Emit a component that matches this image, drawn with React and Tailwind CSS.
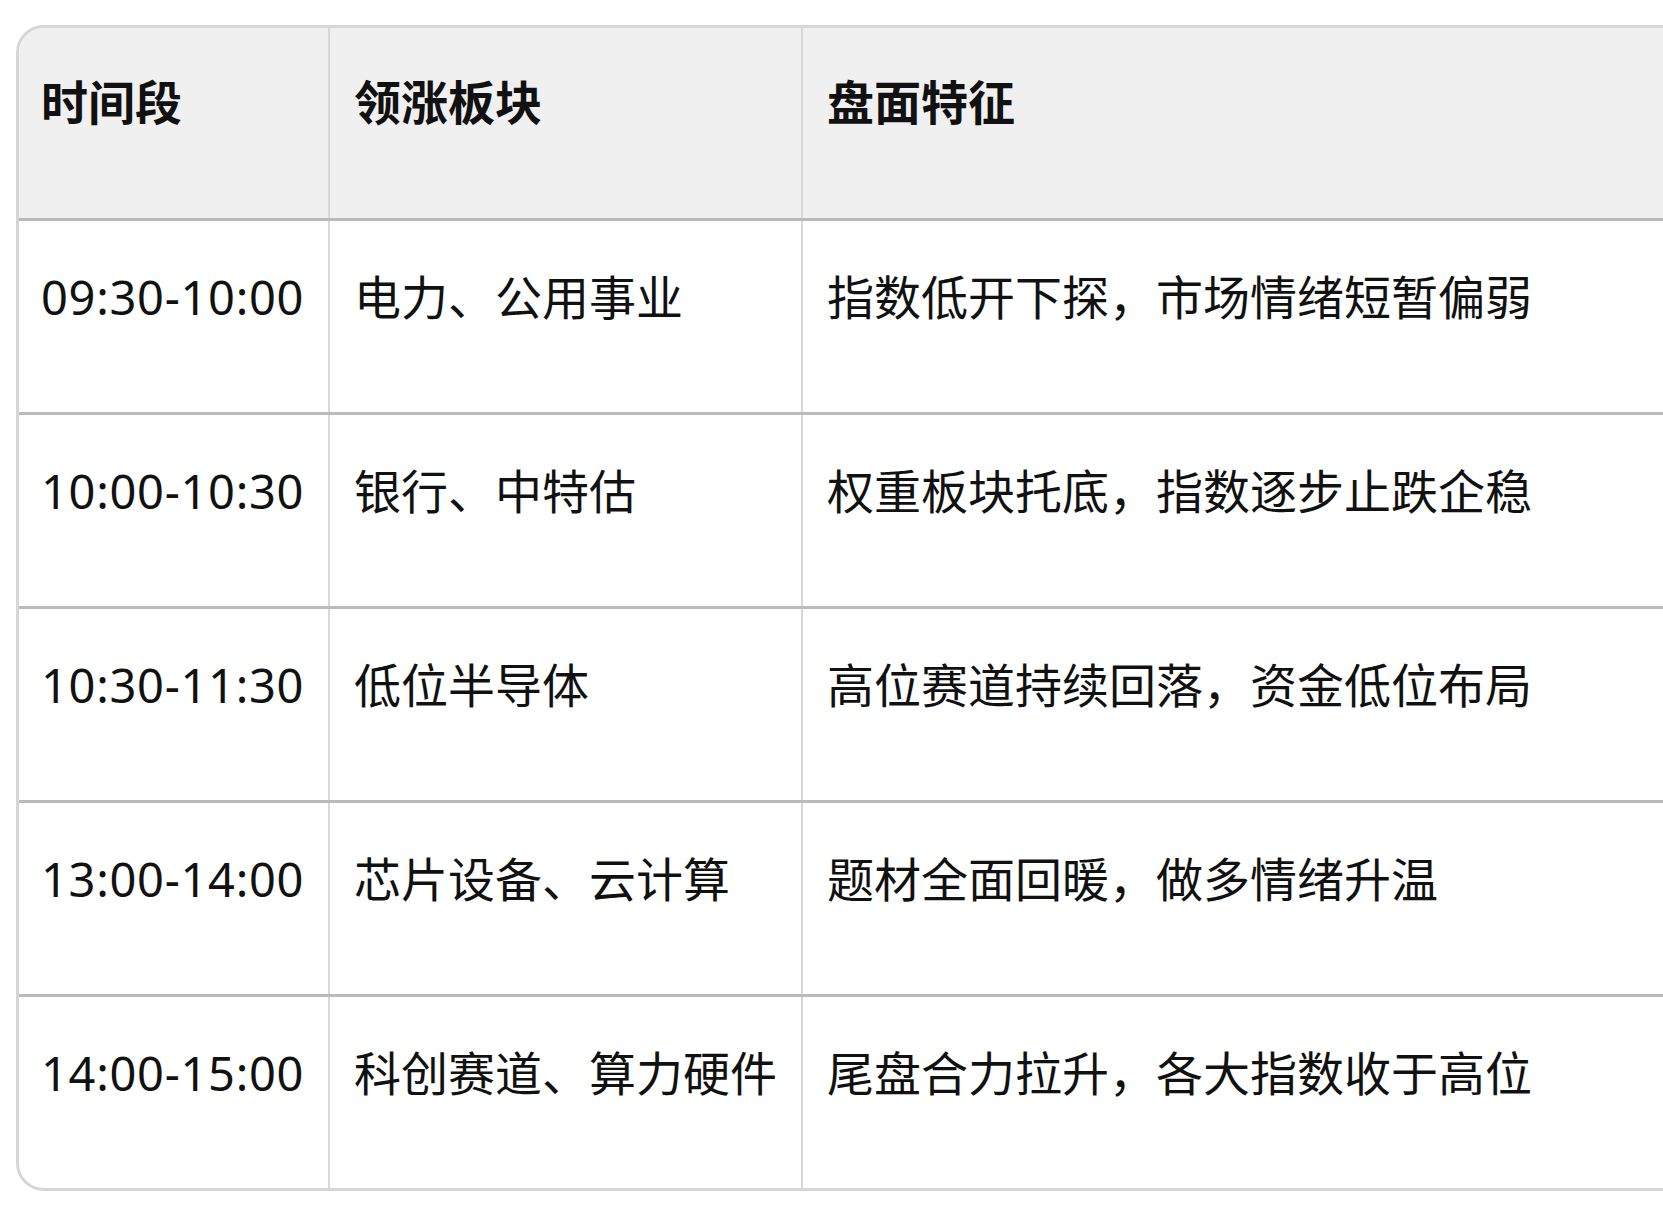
import React from "react";

const rows = [
  ["09:30-10:00", "电力、公用事业", "指数低开下探，市场情绪短暂偏弱"],
  ["10:00-10:30", "银行、中特估", "权重板块托底，指数逐步止跌企稳"],
  ["10:30-11:30", "低位半导体", "高位赛道持续回落，资金低位布局"],
  ["13:00-14:00", "芯片设备、云计算", "题材全面回暖，做多情绪升温"],
  ["14:00-15:00", "科创赛道、算力硬件", "尾盘合力拉升，各大指数收于高位"],
];

const font = { fontFamily: '"Noto Sans", "Noto Sans CJK SC", sans-serif' };

export default function App() {
  return (
    <div className="w-[1663px] h-[1207px] overflow-hidden bg-white" style={font}>
      <div className="ml-[16px] mt-[25px] w-[1720px] border-[3px] border-[#d6d6d6] rounded-[28px] overflow-hidden text-[47px] leading-[69px] text-[#111111]">
        <div className="grid grid-cols-[311px_473px_1fr] h-[193px] bg-[#f0f0f0] border-b-[3px] border-[#bababa] font-bold">
          <div className="border-r-2 border-[#d8d8d8] pl-[22px] pt-[40px]">时间段</div>
          <div className="border-r-2 border-[#d8d8d8] pl-[24px] pt-[40px]">领涨板块</div>
          <div className="pl-[24px] pt-[40px]">盘面特征</div>
        </div>
        {rows.map((r, i) => (
          <div
            key={i}
            className={
              i < rows.length - 1
                ? "grid grid-cols-[311px_473px_1fr] h-[194px] border-b-[3px] border-[#bbbbbb]"
                : "grid grid-cols-[311px_473px_1fr] h-[191px]"
            }
          >
            <div className="border-r-2 border-[#d8d8d8] pl-[22px] pt-[42px] whitespace-nowrap tracking-[0.7px]">{r[0]}</div>
            <div className="border-r-2 border-[#d8d8d8] pl-[24px] pt-[42px] whitespace-nowrap">{r[1]}</div>
            <div className="pl-[24px] pt-[42px] whitespace-nowrap">{r[2]}</div>
          </div>
        ))}
      </div>
    </div>
  );
}
